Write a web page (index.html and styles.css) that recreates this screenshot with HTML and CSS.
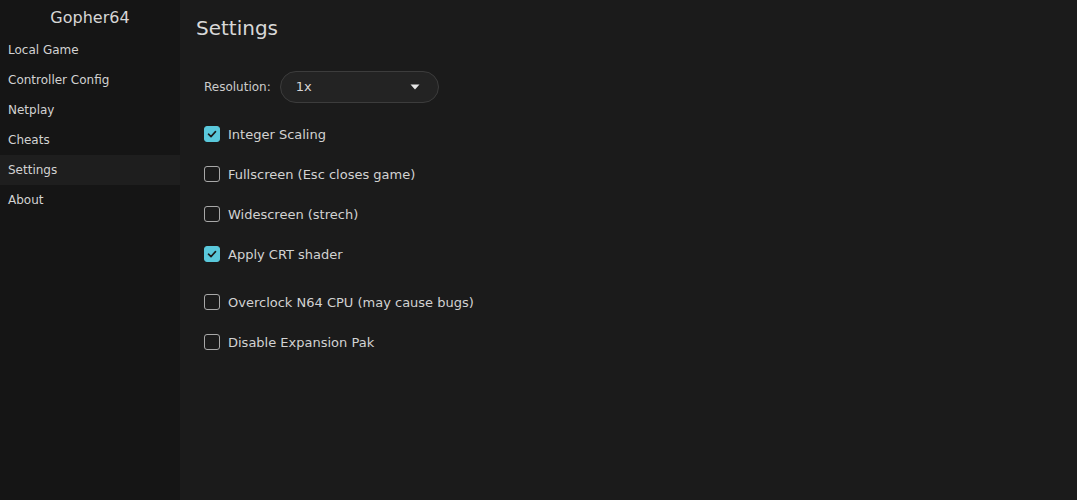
FILE: index.html
```html
<!DOCTYPE html>
<html>
<head>
<meta charset="utf-8">
<link rel="stylesheet" href="styles.css">
</head>
<body>
<div class="app">
  <nav class="sidebar">
    <div class="brand">Gopher64</div>
    <div class="nav-item">Local Game</div>
    <div class="nav-item">Controller Config</div>
    <div class="nav-item">Netplay</div>
    <div class="nav-item">Cheats</div>
    <div class="nav-item active">Settings</div>
    <div class="nav-item">About</div>
  </nav>
  <main class="main">
    <h1 class="title">Settings</h1>
    <div class="options">
      <div class="res-row">
        <span class="res-label">Resolution:</span>
        <div class="select"><span>1x</span><svg class="caret" width="10" height="6" viewBox="0 0 10 6"><path d="M0.5 0.5H9.5L5 5.5Z" fill="#e6e6e6"/></svg></div>
      </div>
      <div class="group">
        <label class="check"><span class="box on"><svg width="16" height="16" viewBox="0 0 16 16"><path d="M4.5 8.2L7 10.6L11.5 5.6" fill="none" stroke="#1b1b1b" stroke-width="1.6" stroke-linecap="round" stroke-linejoin="round"/></svg></span>Integer Scaling</label>
        <label class="check"><span class="box"></span>Fullscreen (Esc closes game)</label>
        <label class="check"><span class="box"></span>Widescreen (strech)</label>
        <label class="check"><span class="box on"><svg width="16" height="16" viewBox="0 0 16 16"><path d="M4.5 8.2L7 10.6L11.5 5.6" fill="none" stroke="#1b1b1b" stroke-width="1.6" stroke-linecap="round" stroke-linejoin="round"/></svg></span>Apply CRT shader</label>
      </div>
      <div class="group second">
        <label class="check"><span class="box"></span>Overclock N64 CPU (may cause bugs)</label>
        <label class="check"><span class="box"></span>Disable Expansion Pak</label>
      </div>
    </div>
  </main>
</div>
</body>
</html>
```
FILE: styles.css
```css
* { box-sizing: border-box; }
html, body { margin: 0; padding: 0; height: 100%; }
body {
  background: #1b1b1b;
  color: #d2d2d2;
  font-family: "DejaVu Sans", sans-serif;
  font-size: 13px;
}
.app { display: flex; height: 500px; }
.sidebar {
  width: 180px;
  flex: none;
  background: #151515;
  display: flex;
  flex-direction: column;
}
.brand {
  height: 35px;
  font-size: 16px;
  text-align: center;
  line-height: 35px;
  color: #d6d6d6;
}
.nav-item {
  height: 30px;
  line-height: 30px;
  padding-left: 8px;
  font-size: 12px;
  color: #d2d2d2;
}
.nav-item.active { background: #1e1e1e; }
.main {
  flex: 1;
  padding: 0 16px;
}
.title {
  margin: 0;
  font-size: 20px;
  font-weight: normal;
  color: #d8d8d8;
  height: 56px;
  line-height: 56px;
}
.options { padding-left: 8px; padding-top: 15px; }
.res-row { display: flex; align-items: center; gap: 9px; height: 31px; }
.res-label { font-size: 12px; color: #cccccc; }
.select {
  width: 159px;
  height: 32px;
  border: 1px solid #3c3c3c;
  background: #232323;
  border-radius: 16px;
  display: flex;
  align-items: center;
  justify-content: space-between;
  padding: 0 18px 0 15px;
  color: #d6d6d6;
}
.caret { display: block; margin-top: 1px; }
.group { display: flex; flex-direction: column; padding-top: 12px; }
.group.second { padding-top: 8px; }
.check {
  display: flex;
  align-items: center;
  height: 40px;
  gap: 8px;
  color: #d2d2d2;
}
.box {
  width: 16px;
  height: 16px;
  border: 1px solid #a8a8a8;
  border-radius: 3px;
  flex: none;
}
.box.on {
  background: #5ac8db;
  border-color: #5ac8db;
}
.box.on svg { display: block; margin: -1px; }
```
